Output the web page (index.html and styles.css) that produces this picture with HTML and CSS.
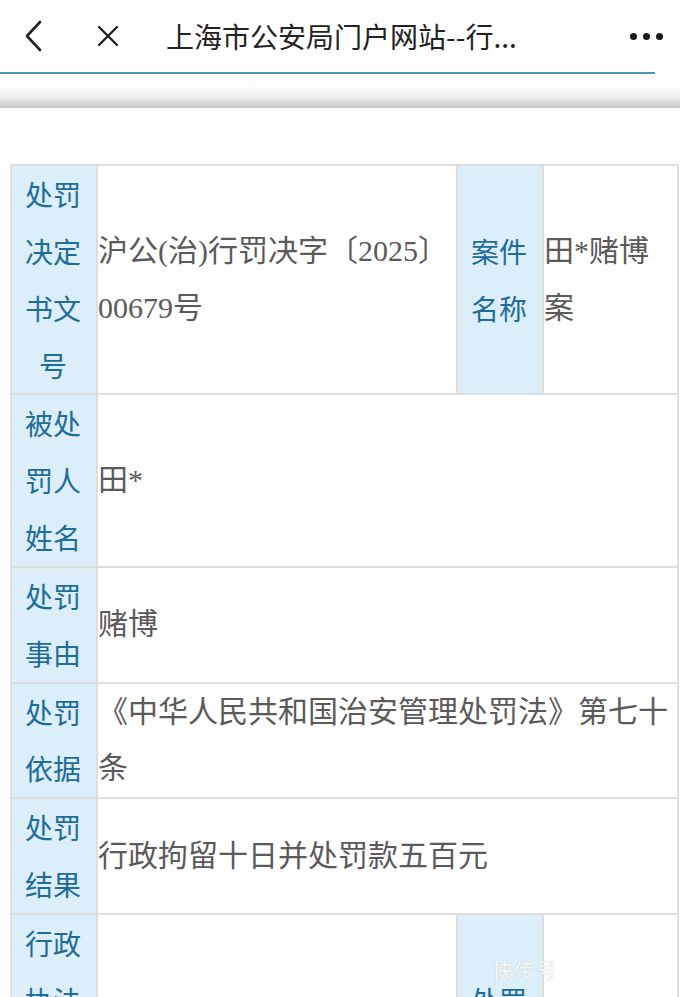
FILE: index.html
```html
<!DOCTYPE html>
<html lang="zh-CN">
<head>
<meta charset="utf-8">
<title>上海市公安局门户网站--行政处罚</title>
<link rel="stylesheet" href="styles.css">
</head>
<body>
<header class="topbar">
  <svg class="icon back" width="24" height="32" viewBox="0 0 24 32"><path d="M18 2 L5 16 L18 30" fill="none" stroke="#222" stroke-width="2.6" stroke-linecap="round" stroke-linejoin="round"/></svg>
  <svg class="icon close" width="24" height="24" viewBox="0 0 24 24"><path d="M3 3 L21 21 M21 3 L3 21" fill="none" stroke="#222" stroke-width="2.4" stroke-linecap="round"/></svg>
  <div class="title">上海市公安局门户网站--行...</div>
  <div class="more"><span></span><span></span><span></span></div>
</header>
<div class="progress"></div>
<div class="shade"></div>
<main class="content">
  <table class="info">
    <colgroup><col class="c1"><col class="c2"><col class="c3"><col class="c4"></colgroup>
    <tr>
      <th>处罚决定书文号</th>
      <td>沪公(治)行罚决字〔2025〕00679号</td>
      <th>案件名称</th>
      <td>田*赌博案</td>
    </tr>
    <tr>
      <th>被处罚人姓名</th>
      <td colspan="3">田*</td>
    </tr>
    <tr>
      <th>处罚事由</th>
      <td colspan="3">赌博</td>
    </tr>
    <tr>
      <th>处罚依据</th>
      <td colspan="3">《中华人民共和国治安管理处罚法》第七十条</td>
    </tr>
    <tr>
      <th>处罚结果</th>
      <td colspan="3">行政拘留十日并处罚款五百元</td>
    </tr>
    <tr>
      <th>行政执法机关名称</th>
      <td></td>
      <th>处罚日期</th>
      <td>2025.11.</td>
    </tr>
  </table>
  <div class="watermark">快传号</div>
</main>
</body>
</html>
```

FILE: styles.css
```css
html, body {
  margin: 0;
  padding: 0;
  background: #fff;
  overflow: hidden;
}
body {
  width: 680px;
  height: 997px;
  font-family: "Noto Sans CJK SC", "Noto Sans", sans-serif;
}
.topbar {
  height: 72px;
  display: flex;
  align-items: center;
  background: #fff;
}
.icon.back {
  margin-left: 22px;
}
.icon.close {
  margin-left: 50px;
}
.title {
  margin-left: 46px;
  font-size: 28px;
  color: #222;
  flex: 1;
  white-space: nowrap;
}
.more {
  display: flex;
  gap: 6px;
  margin-right: 17px;
}
.more span {
  width: 7px;
  height: 7px;
  border-radius: 50%;
  background: #1a1a1a;
}
.progress {
  height: 2px;
  width: 655px;
  background: #4a9fae;
}
.shade {
  height: 34px;
  background: linear-gradient(to bottom, #fff 0%, #fbfbfb 40%, #ececec 70%, #cfcfcf 92%, #c4c4c4 100%);
}
.content {
  position: relative;
  padding: 56px 0 0 10px;
}
.info {
  border-collapse: collapse;
  table-layout: fixed;
  width: 667px;
  border: 2px solid #dedede;
}
.info col.c1 { width: 86px; }
.info col.c2 { width: 360px; }
.info col.c3 { width: 86px; }
.info col.c4 { width: 135px; }
.info th, .info td {
  border: 2px solid #dedede;
  padding: 0;
  line-height: 56.85px;
  vertical-align: middle;
  word-break: break-all;
}
.info th {
  background: #dbeef9;
  color: #1e6c99;
  font-weight: normal;
  font-size: 28px;
  padding: 0 13px 0 11px;
  text-align: center;
  font-family: "Noto Sans CJK SC", sans-serif;
}
.info td {
  background: #fff;
  color: #5a5a5a;
  font-size: 30px;
  text-align: left;
  font-family: "Liberation Serif", "Noto Sans CJK SC", serif;
}
.watermark {
  position: absolute;
  left: 492px;
  top: 846px;
  font-size: 21px;
  color: rgba(255, 255, 255, 0.9);
  text-shadow: 0 0 1px rgba(150, 150, 150, 0.6);
  letter-spacing: 1px;
}
```
